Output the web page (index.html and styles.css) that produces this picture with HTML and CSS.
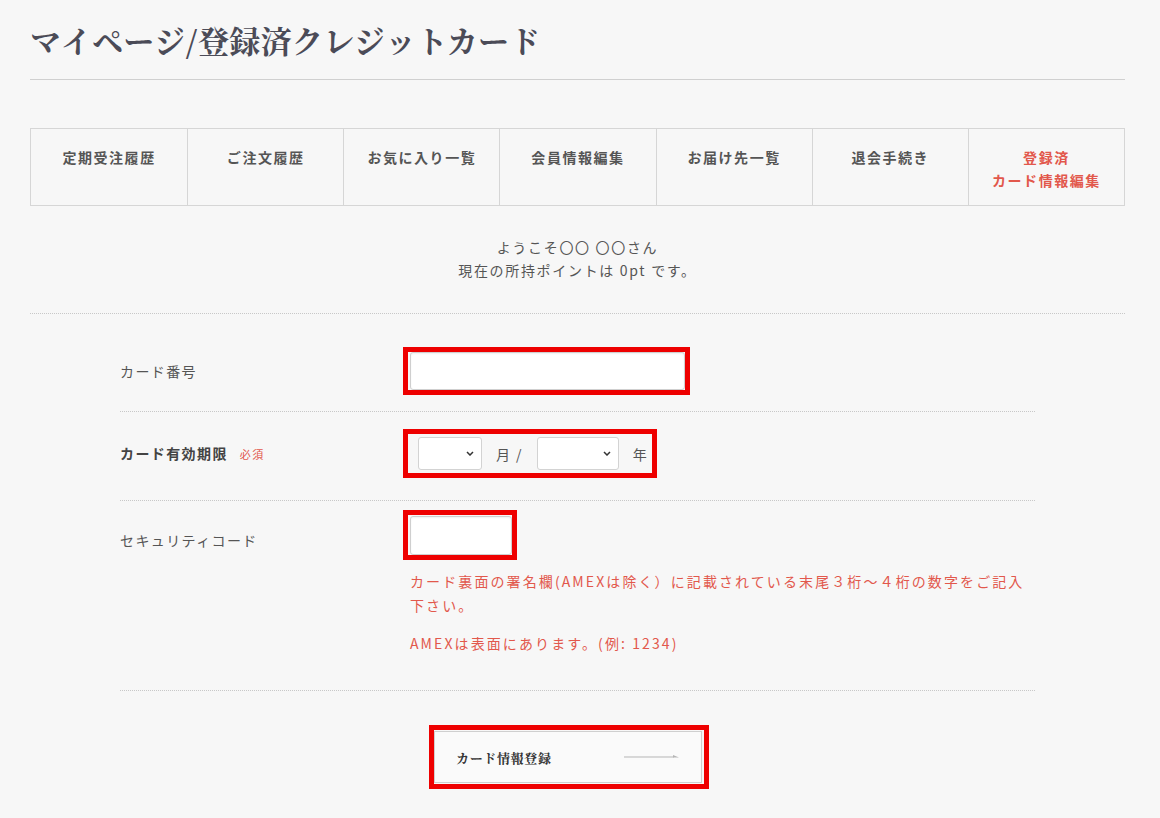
FILE: index.html
```html
<!DOCTYPE html>
<html lang="ja">
<head>
  <meta charset="UTF-8" />
  <meta name="viewport" content="width=device-width, initial-scale=1" />
  <title>マイページ/登録済クレジットカード</title>
  <link rel="stylesheet" href="styles.css">
</head>
<body>
  <div class="page">
    <h1 class="page-title">マイページ/登録済クレジットカード</h1>

    <nav class="mypage-nav">
      <a href="#">定期受注履歴</a>
      <a href="#">ご注文履歴</a>
      <a href="#">お気に入り一覧</a>
      <a href="#">会員情報編集</a>
      <a href="#">お届け先一覧</a>
      <a href="#">退会手続き</a>
      <a href="#" class="current">登録済<br>カード情報編集</a>
    </nav>

    <div class="welcome">
      <p>ようこそ〇〇 〇〇さん</p>
      <p>現在の所持ポイントは 0pt です。</p>
    </div>

    <form class="card-form">
      <div class="form-row row-number">
        <div class="form-label">カード番号</div>
        <div class="form-field">
          <div class="mark mark-number">
            <input type="text" class="text-input card-number" />
          </div>
        </div>
      </div>

      <div class="form-row row-expire">
        <div class="form-label"><strong>カード有効期限</strong><span class="required">必須</span></div>
        <div class="form-field">
          <div class="mark mark-expire">
            <span class="select-wrap month">
              <select><option></option></select>
              <svg class="chevron" width="8" height="5" viewBox="0 0 8 5"><path d="M1 1l3 3 3-3" fill="none" stroke="#333" stroke-width="1.5"/></svg>
            </span>
            <span class="unit unit-month">月 /</span>
            <span class="select-wrap year">
              <select><option></option></select>
              <svg class="chevron" width="8" height="5" viewBox="0 0 8 5"><path d="M1 1l3 3 3-3" fill="none" stroke="#333" stroke-width="1.5"/></svg>
            </span>
            <span class="unit">年</span>
          </div>
        </div>
      </div>

      <div class="form-row row-security">
        <div class="form-label">セキュリティコード</div>
        <div class="form-field">
          <div class="mark mark-security">
            <input type="text" class="text-input security-code" />
          </div>
          <p class="hint first">カード裏面の署名欄(AMEXは除く）に記載されている末尾３桁～４桁の数字をご記入下さい。</p>
          <p class="hint">AMEXは表面にあります。(例: 1234)</p>
        </div>
      </div>

      <div class="submit-area">
        <div class="mark mark-button">
          <button type="submit" class="submit-btn">
            <span>カード情報登録</span>
            <svg width="56" height="6" viewBox="0 0 56 6"><path d="M0 3h50" stroke="#b5b5b5" stroke-width="1"/><path d="M49 1l6 2.5h-6z" fill="#b5b5b5"/></svg>
          </button>
        </div>
      </div>
    </form>
  </div>
</body>
</html>
```

FILE: styles.css
```css
body {
  margin: 0;
  padding: 0;
  background-color: #f7f7f7;
  color: #555;
  font-family: "Noto Sans CJK JP", "Noto Sans", sans-serif;
  font-size: 14px;
}
p {
  margin: 0;
}
.page {
  width: 1095px;
  margin-left: 30px;
  padding-bottom: 30px;
}
.page-title {
  margin: 0;
  padding: 20px 0 19px;
  line-height: 40px;
  font-size: 31px;
  font-family: "Noto Serif CJK JP", "Noto Serif CJK SC", "Noto Sans CJK JP", serif;
  font-weight: bold;
  color: #4b4b57;
  letter-spacing: 0.01em;
  border-bottom: 1px solid #d0d0d0;
}
.mypage-nav {
  display: grid;
  grid-template-columns: repeat(7, 1fr);
  margin-top: 48px;
  border: 1px solid #d6d6d6;
}
.mypage-nav a {
  display: block;
  height: 76px;
  box-sizing: border-box;
  padding-top: 17px;
  border-left: 1px solid #d6d6d6;
  text-align: center;
  text-decoration: none;
  color: #555;
  font-weight: bold;
  line-height: 23px;
  letter-spacing: 0.11em;
}
.mypage-nav a:first-child {
  border-left: none;
}
.mypage-nav a.current {
  color: #e2584c;
}
.welcome {
  margin-top: 30px;
  padding-bottom: 31px;
  text-align: center;
  line-height: 23px;
  letter-spacing: 0.12em;
  border-bottom: 1px dotted #c8c8c8;
}
.card-form {
  width: 915px;
  margin: 0 auto;
}
.form-row {
  display: grid;
  grid-template-columns: 283px 1fr;
  border-bottom: 1px dotted #c8c8c8;
  letter-spacing: 0.1em;
}
.form-label {
  align-self: center;
  line-height: 24px;
}
.form-label strong {
  color: #444;
}
.required {
  margin-left: 12px;
  color: #e2584c;
  font-size: 11px;
  font-weight: normal;
}
.row-number {
  padding: 33px 0 16px;
}
.row-expire {
  padding: 17px 0 22px;
}
.row-security {
  padding: 9px 0 35px;
}
.row-security .form-label {
  align-self: start;
  padding-top: 18px;
}
.mark {
  display: inline-flex;
  align-items: center;
  border: 5px solid #ee0000;
  vertical-align: top;
}
.mark-number {
  padding: 0 0 0 2px;
}
.mark-expire {
  height: 39px;
  padding: 0 4px 0 10px;
}
.mark-security {
  height: 40px;
  padding: 0 0 0 2px;
}
.text-input {
  box-sizing: border-box;
  border: 1px solid #cfcfcf;
  border-radius: 3px;
  background: #fff;
  box-shadow: inset 0 1px 2px rgba(0, 0, 0, 0.06);
  font: inherit;
}
.card-number {
  width: 275px;
  height: 38px;
}
.security-code {
  width: 102px;
  height: 39px;
}
.select-wrap {
  position: relative;
  display: inline-block;
  height: 33px;
}
.select-wrap select {
  appearance: none;
  -webkit-appearance: none;
  box-sizing: border-box;
  height: 33px;
  border: 1px solid #d3d3d3;
  border-radius: 3px;
  background: #fff;
  font: inherit;
}
.select-wrap.month select {
  width: 64px;
}
.select-wrap.year select {
  width: 82px;
}
.chevron {
  position: absolute;
  right: 8px;
  top: 14px;
  pointer-events: none;
}
.unit {
  margin-left: 14px;
  color: #555;
}
.unit-month {
  margin-right: 14px;
}
.hint {
  padding: 0 10px 0 7px;
  line-height: 24px;
  color: #e2584c;
  font-size: 14px;
  letter-spacing: 0.15em;
}
.hint.first {
  margin-top: 9px;
  margin-bottom: 14px;
}
.submit-area {
  display: flex;
  justify-content: center;
  padding-right: 17px;
  margin-top: 34px;
}
.mark-button {
  padding: 1px 2px 1px 0;
}
.submit-btn {
  display: flex;
  align-items: center;
  justify-content: space-between;
  width: 268px;
  height: 52px;
  padding: 0 21px 0 21px;
  background: #fafafa;
  border: 1px solid #cfcfcf;
  font-family: "Noto Serif CJK JP", "Noto Sans CJK JP", serif;
  font-size: 13px;
  font-weight: bold;
  color: #333;
  letter-spacing: 0.05em;
  cursor: pointer;
}
```
